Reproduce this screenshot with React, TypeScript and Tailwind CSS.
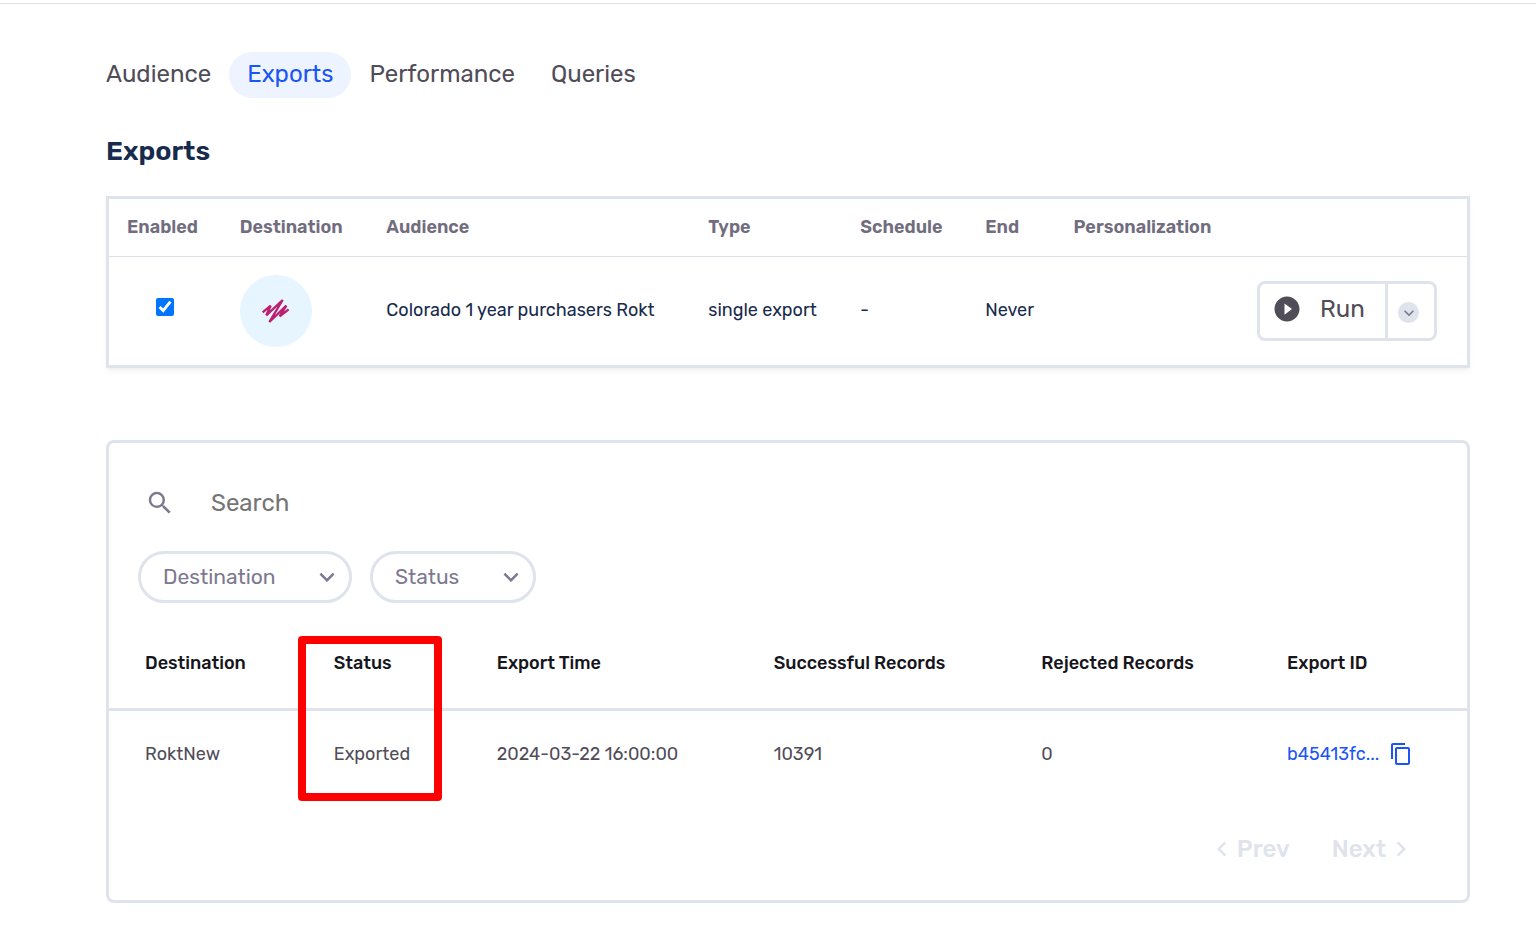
import { useState } from "react";
import {
  MdChevronLeft,
  MdChevronRight,
  MdContentCopy,
  MdExpandMore,
  MdPlayCircleFilled,
  MdSearch,
} from "react-icons/md";

interface ExportRecord {
  id: string;
  destination: string;
  status: string;
  time: string;
  successful: number;
  rejected: number;
}

const tabs = ["Audience", "Exports", "Performance", "Queries"];

const records: ExportRecord[] = [
  {
    id: "b45413fc...",
    destination: "RoktNew",
    status: "Exported",
    time: "2024-03-22 16:00:00",
    successful: 10391,
    rejected: 0,
  },
];

function RoktLogo() {
  return (
    <svg width="30" height="30" viewBox="0 0 90 90" fill="none">
      <path
        d="M5 49 L29 29 L16 58 L65 12 L25 78 L76 29 L56 61 L83 40"
        stroke="#b9206f"
        strokeWidth="7"
        strokeLinejoin="bevel"
      />
    </svg>
  );
}

function FilterSelect({ label, width }: { label: string; width: string }) {
  return (
    <div className={`relative ${width}`}>
      <select
        aria-label={label}
        className="h-[52px] w-full appearance-none rounded-full border-3 border-[#dfe3ec] bg-white pl-[22px] text-[21px] text-[#7d7890]"
      >
        <option>{label}</option>
      </select>
      <MdExpandMore
        size={30}
        className="pointer-events-none absolute top-[11px] right-[10px] text-[#7d7890]"
      />
    </div>
  );
}

function App() {
  const [activeTab, setActiveTab] = useState<string>("Exports");
  const [enabled, setEnabled] = useState<boolean>(true);
  const [search, setSearch] = useState<string>("");

  return (
    <div className="min-h-screen bg-white pt-[3px] font-['Rubik','Inter',sans-serif]">
      <div className="border-t border-[#dfdfe6] pt-12 pr-[66px] pb-10 pl-[106px]">
        <nav className="-ml-[18px] flex">
          {tabs.map((tab) => (
            <button
              key={tab}
              onClick={() => setActiveTab(tab)}
              className={`h-[46px] rounded-full px-[18px] pb-[2px] text-2xl leading-8 ${
                activeTab === tab
                  ? "bg-[#edf4ff] text-[#1b55f5]"
                  : "text-[#504c58]"
              }`}
            >
              {tab}
            </button>
          ))}
        </nav>

        <h1 className="mt-[35px] text-[27px] leading-9 font-semibold text-[#172b4d]">
          Exports
        </h1>

        <section className="mt-[27px] border-3 border-[#dfe3ec] shadow-md shadow-black/5">
          <table className="w-full table-fixed text-left text-lg text-[#172b4d]">
            <thead>
              <tr className="h-[57px] border-b border-[#dfdfe8] text-[#716d7f]">
                <th className="w-[8.3%] pl-[18px] font-semibold">Enabled</th>
                <th className="w-[10.8%] pl-[18px] font-semibold">
                  Destination
                </th>
                <th className="w-[23.7%] pl-[18px] font-semibold">Audience</th>
                <th className="w-[11.2%] pl-[18px] font-semibold">Type</th>
                <th className="w-[9.2%] pl-[18px] font-semibold">Schedule</th>
                <th className="w-[6.5%] pl-[18px] font-semibold">End</th>
                <th className="pl-[18px] font-semibold">Personalization</th>
                <th className="w-[16%]"></th>
              </tr>
            </thead>
            <tbody>
              <tr className="h-[109px]">
                <td className="pb-[10px] text-center">
                  <input
                    type="checkbox"
                    aria-label="Enabled"
                    checked={enabled}
                    onChange={(e) => setEnabled(e.target.checked)}
                    className="size-[18px] align-middle accent-[#0075ff]"
                  />
                </td>
                <td className="pl-[18px]">
                  <div className="flex size-[72px] items-center justify-center rounded-full bg-[#e6f5ff]">
                    <RoktLogo />
                  </div>
                </td>
                <td className="pb-[2px] pl-[18px]">
                  Colorado 1 year purchasers Rokt
                </td>
                <td className="pb-[2px] pl-[18px]">single export</td>
                <td className="pb-[2px] pl-[18px]">-</td>
                <td className="pb-[2px] pl-[18px]">Never</td>
                <td></td>
                <td className="pr-[30px]">
                  <div className="ml-auto flex h-[60px] w-[180px] rounded-lg border-3 border-[#dfe3ec]">
                    <button className="flex flex-1 items-center gap-[18px] pb-1 pl-3 text-2xl text-[#504c58]">
                      <MdPlayCircleFilled size={30} />
                      Run
                    </button>
                    <button
                      aria-label="More run options"
                      className="flex w-[49px] items-center border-l-3 border-[#dfe3ec] pt-1 pl-[10px]"
                    >
                      <span className="flex size-[21px] items-center justify-center rounded-full bg-[#dfe3ec] text-[#7d7890]">
                        <MdExpandMore size={20} />
                      </span>
                    </button>
                  </div>
                </td>
              </tr>
            </tbody>
          </table>
        </section>

        <section className="mt-[72px] rounded-lg border-3 border-[#dfe3ec] pt-10">
          <label className="flex h-10 items-center gap-9 pr-9 pl-9">
            <MdSearch size={30} className="text-[#7d7890]" />
            <input
              type="text"
              aria-label="Search"
              placeholder="Search"
              value={search}
              onChange={(e) => setSearch(e.target.value)}
              className="flex-1 text-2xl outline-none placeholder:text-[#757575]"
            />
          </label>

          <div className="mt-7 flex gap-[18px] pl-[29px]">
            <FilterSelect label="Destination" width="w-[214px]" />
            <FilterSelect label="Status" width="w-[166px]" />
          </div>

          <table className="mt-4 w-full table-fixed text-left text-lg text-[#504c58]">
            <thead>
              <tr className="h-[90px] border-b-3 border-[#dfe3ec] text-[#16161c]">
                <th className="w-[13.9%] pl-9 font-medium">Destination</th>
                <th className="relative w-[12%] pl-9 font-medium">
                  Status
                  {/* highlight around the status column */}
                  <div className="pointer-events-none absolute top-[17px] left-0 h-[165px] w-36 rounded-sm border-8 border-[#ff0000]"></div>
                </th>
                <th className="w-[20.4%] pl-9 font-medium">Export Time</th>
                <th className="w-[19.7%] pl-9 font-medium">
                  Successful Records
                </th>
                <th className="w-[18.1%] pl-9 font-medium">Rejected Records</th>
                <th className="pl-9 font-medium">Export ID</th>
              </tr>
            </thead>
            <tbody>
              {records.map((record) => (
                <tr key={record.id} className="h-[88px]">
                  <td className="pl-9">{record.destination}</td>
                  <td className="pl-9">{record.status}</td>
                  <td className="pl-9">{record.time}</td>
                  <td className="pl-9">{record.successful}</td>
                  <td className="pl-9">{record.rejected}</td>
                  <td className="pl-9">
                    <div className="flex items-center gap-[10px] text-[#1b55f5]">
                      <a href="#">{record.id}</a>
                      <button aria-label="Copy export ID">
                        <MdContentCopy size={24} />
                      </button>
                    </div>
                  </td>
                </tr>
              ))}
            </tbody>
          </table>

          <div className="mt-[34px] mb-[33px] flex justify-end gap-[42px] pr-[51px] text-2xl leading-9 font-medium text-[#dfe3ec]">
            <button className="flex items-center">
              <MdChevronLeft size={30} />
              Prev
            </button>
            <button className="flex items-center">
              Next
              <MdChevronRight size={30} />
            </button>
          </div>
        </section>
      </div>
    </div>
  );
}

export default App;
